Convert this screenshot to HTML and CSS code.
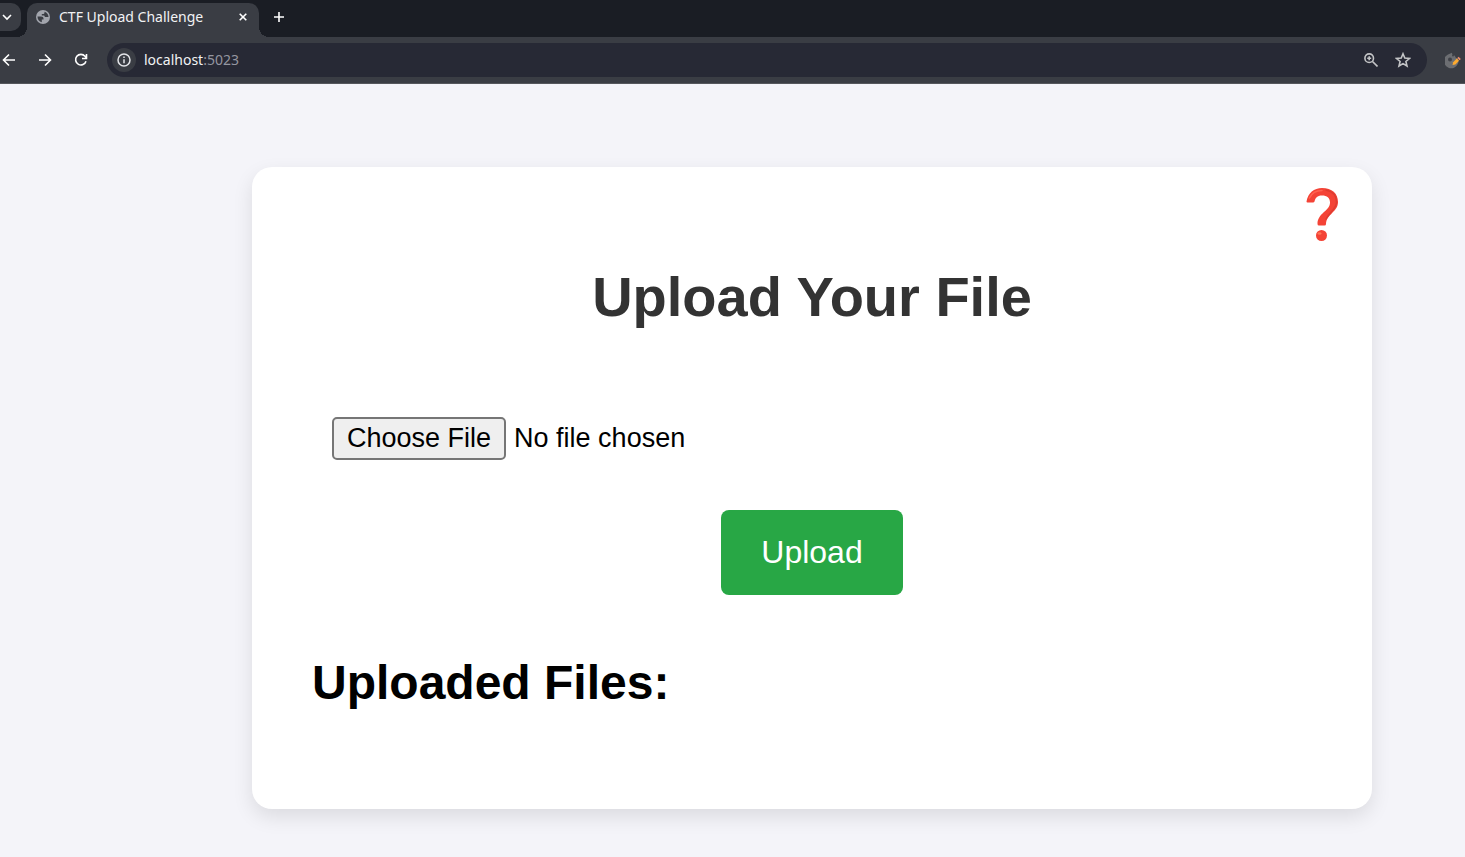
FILE: index.html
```html
<!DOCTYPE html>
<html lang="en">
<head>
<meta charset="utf-8">
<title>CTF Upload Challenge</title>
<link rel="stylesheet" href="styles.css">
</head>
<body>
<header class="browser">
  <div class="tabstrip">
    <button class="tab-search" aria-label="Search tabs"><svg width="10" height="10" viewBox="0 0 10 10"><path class="line" d="M1 3l4 4 4-4"/></svg></button>
    <div class="tab">
      <svg class="globe" width="14" height="14" viewBox="0 0 14 14"><circle cx="7" cy="7" r="7" fill="#a2a5ad"/><path d="M1.500 6.500h3.500c1.600 0 2.500.8 2.500 2v1H5.800v2.800C3.200 11.800 1.400 9.500 1.500 6.500zM8.500 1.700v1c0 .8-.7 1.300-1.500 1.300H5.800v1.500h1.700c1 0 1.300.7 1.300 1.500h3.700c0-2.600-1.600-4.700-4-5.300z" fill="#3a3d44"/></svg>
      <span class="tab-title">CTF Upload Challenge</span>
      <button class="icon-button" aria-label="Close tab"><svg width="8" height="8" viewBox="0 0 8 8"><path class="line" d="M.7.700l6.600 6.600M7.300.7L.7 7.300"/></svg></button>
    </div>
    <button class="icon-button new-tab" aria-label="New tab"><svg width="12" height="12" viewBox="0 0 12 12"><path class="line" d="M6 1v10M1 6h10"/></svg></button>
  </div>
  <div class="toolbar">
    <nav class="nav">
      <button class="icon-button" aria-label="Back"><svg width="14" height="14" viewBox="0 0 14 14"><path class="line" d="M13 7H2M7 1.500L1.500 7 7 12.500"/></svg></button>
      <button class="icon-button" aria-label="Forward"><svg width="14" height="14" viewBox="0 0 14 14"><path class="line" d="M1 7h11M7 1.500L12.500 7 7 12.500"/></svg></button>
      <button class="icon-button" aria-label="Reload"><svg width="14" height="14" viewBox="0 0 14 14"><path class="line" d="M12 8.200A5.300 5.300 0 1 1 11 3.300l1.300 1.500M12.500 1v4.500H8"/></svg></button>
    </nav>
    <div class="omnibox">
      <button class="site-info" aria-label="Site information"><svg width="14" height="14" viewBox="0 0 14 14"><circle class="thin" cx="7" cy="7" r="6"/><path class="thin" d="M7 6.300v4M7 3.500v1.500"/></svg></button>
      <span class="url">localhost<span class="port">:5023</span></span>
      <button class="icon-button" aria-label="Zoom"><svg width="14" height="14" viewBox="0 0 14 14"><g class="muted"><circle cx="5.200" cy="5.200" r="4.300"/><path d="M8.500 8.500l5 5M5.200 3.200v4M3.200 5.200h4"/></g></svg></button>
      <button class="icon-button" aria-label="Bookmark"><svg width="16" height="16" viewBox="0 0 16 16"><path class="muted" d="M8 1.800l1.800 4.300 4.600.4-3.500 3 1.100 4.500L8 11.600 4 14l1.100-4.500-3.500-3 4.600-.4z"/></svg></button>
    </div>
    <button class="icon-button extension" aria-label="Cookie editor"><svg width="17" height="17" viewBox="0 0 17 17"><path d="M7 .8a3 3 0 0 0 3 3 2.500 2.500 0 0 0 3 2.500A7.300 7.300 0 1 1 3 2.400z" fill="#6c6e72"/><circle cx="5" cy="7.500" r="2" fill="#3f4147"/><circle cx="8" cy="3.500" r="1" fill="#3f4147"/><path d="M7.500 13l.7-2.800 3.600-3.600 2.200 2.200-3.600 3.600z" fill="#ffab2e"/><path d="M12.400 6l1.200-1.200 2.200 2.200-1.200 1.200z" fill="#ef8d6c"/></svg></button>
  </div>
</header>
<main class="page">
  <section class="card">
    <button class="help" aria-label="Help"><svg width="34" height="56" viewBox="0 0 34 56"><path d="M1.500 14.500C3 6 9 1 17 1c10 0 16 5.500 16 14 0 10-11.500 12-12 22q0 1.500-1.500 1.500H14q-1.500 0-1.500-1.500C12.500 26 25 24 25 15.500 25 11 22 8.500 17 8.500c-5 0-6.500 2.500-7.500 6q-.3 1-1.500 1H2.500q-1 0-1-1z" fill="#f44336"/><path d="M4.500 11C7 5.500 11 3.500 17 3.500" fill="none" stroke="#ff6250" stroke-width="1.500" stroke-linecap="round"/><path d="M21 3c7 1.500 10.500 6 10.500 12 0 7-7 10-10.500 17" fill="none" stroke="#de3c31" stroke-width="1.500" stroke-linecap="round"/><circle cx="16.500" cy="48.500" r="5.500" fill="#f44336"/><ellipse cx="14.500" cy="46.500" rx="2" ry="1.300" fill="#ff7555"/></svg></button>
    <h1 class="title">Upload Your File</h1>
    <form class="form">
      <input class="file" type="file" aria-label="File to upload">
      <button class="upload" type="button">Upload</button>
    </form>
    <h2 class="subtitle">Uploaded Files:</h2>
  </section>
</main>
</body>
</html>
```
FILE: styles.css
```css
* { box-sizing: border-box; }
body {
  margin: 0;
  min-height: 100vh;
  background: #f4f4f9;
  color: #000;
  font-family: "Liberation Sans", Arial, sans-serif;
}
button { font: inherit; cursor: pointer; }
svg { display: block; }

.browser {
  background: #3a3d44;
  border-bottom: 1px solid #55575c;
  color: #f1f2f4;
  font-family: "Noto Sans", sans-serif;
  font-size: 14px;
}
.line { fill: none; stroke: #fff; stroke-width: 1.6; }
.thin { fill: none; stroke: #e4e5e9; stroke-width: 1.5; }
.muted { fill: none; stroke: #c3c4c6; stroke-width: 1.6; }
.tabstrip {
  display: flex;
  height: 37px;
  background: #1a1d24;
}
.tab-search {
  display: flex;
  align-items: center;
  width: 21px;
  height: 28px;
  margin-top: 3px;
  padding: 0 0 0 2px;
  border: 0;
  border-radius: 0 10px 10px 0;
  background: #3a3d44;
}
.tab {
  position: relative;
  display: flex;
  align-items: center;
  width: 232px;
  margin: 3px 0 0 6px;
  padding: 0 10px 6px 9px;
  border-radius: 10px 10px 0 0;
  background: #3a3d44;
}
.tab::before,
.tab::after {
  content: "";
  position: absolute;
  bottom: 0;
  width: 10px;
  height: 10px;
}
.tab::before {
  right: 100%;
  background: radial-gradient(circle at 0 0, transparent 10px, #3a3d44 10px);
}
.tab::after {
  left: 100%;
  background: radial-gradient(circle at 100% 0, transparent 10px, #3a3d44 10px);
}
.tab-title {
  flex: 1;
  margin-left: 9px;
  line-height: 20px;
  white-space: nowrap;
}
.icon-button {
  display: flex;
  align-items: center;
  justify-content: center;
  width: 12px;
  padding: 0;
  border: 0;
  background: none;
}
.new-tab { margin: 3px 0 6px 14px; }
.toolbar {
  display: flex;
  align-items: center;
  height: 46px;
  padding-right: 3px;
}
.nav { display: flex; gap: 22px; margin-left: 2px; }
.nav .icon-button { width: 14px; }
.omnibox {
  display: flex;
  flex: 1;
  align-items: center;
  height: 34px;
  margin-left: 19px;
  padding: 0 16px 0 5px;
  border-radius: 17px;
  background: #272935;
}
.omnibox .icon-button { width: 16px; margin-left: 16px; }
.site-info {
  display: flex;
  align-items: center;
  justify-content: center;
  width: 24px;
  height: 24px;
  padding: 0;
  border: 0;
  border-radius: 50%;
  background: #3a3d44;
}
.url { flex: 1; margin-left: 8px; line-height: 18px; }
.port { color: #9496a0; }
.extension { width: 17px; margin-left: 18px; }

.page { padding: 83px 93px 48px 252px; }
.card {
  position: relative;
  padding: 60px;
  border-radius: 20px;
  background: #fff;
  box-shadow: 0 8px 20px rgba(0, 0, 0, 0.1);
}
.help {
  position: absolute;
  top: 20px;
  right: 33px;
  padding: 0;
  border: 0;
  background: none;
}
.title {
  margin: 38px 0;
  color: #333;
  font-size: 56px;
  line-height: 64px;
  text-align: center;
}
.form {
  display: flex;
  flex-direction: column;
  align-items: center;
  gap: 50px;
  margin-top: 88px;
}
.file {
  align-self: stretch;
  margin: 0 20px;
  font: 27px "Liberation Sans", Arial, sans-serif;
}
.file::file-selector-button {
  height: 43px;
  margin: 0 8px 0 0;
  padding: 0 13px;
  border: 2px solid #767676;
  border-radius: 5px;
  background: #efefef;
  color: #000;
  font: inherit;
}
.upload {
  padding: 24px 40px;
  border: 0;
  border-radius: 8px;
  background: #28a745;
  color: #fff;
  font-size: 32px;
  line-height: 37px;
}
.subtitle {
  margin: 60px 0 38px;
  font-size: 48px;
  line-height: 56px;
}
```
